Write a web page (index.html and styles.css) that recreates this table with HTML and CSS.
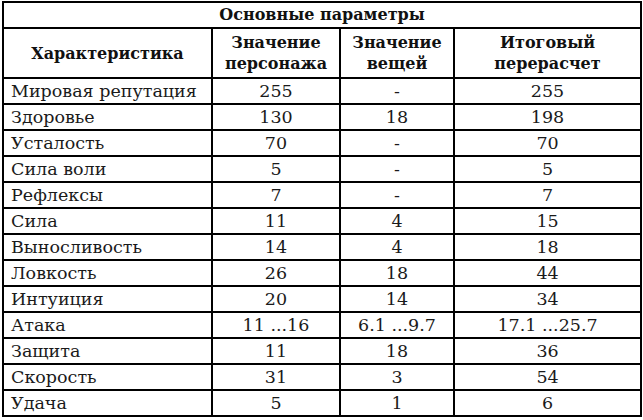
FILE: index.html
```html
<!DOCTYPE html>
<html lang="ru">
<head>
<meta charset="utf-8">
<link rel="stylesheet" href="styles.css">
</head>
<body>
<table class="params">
  <colgroup>
    <col class="c1"><col class="c2"><col class="c3"><col class="c4">
  </colgroup>
  <tr class="title"><th colspan="4">Основные параметры</th></tr>
  <tr class="head">
    <th>Характеристика</th>
    <th>Значение<br>персонажа</th>
    <th>Значение<br>вещей</th>
    <th>Итоговый<br>перерасчет</th>
  </tr>
  <tr><td class="name">Мировая репутация</td><td>255</td><td>-</td><td>255</td></tr>
  <tr><td class="name">Здоровье</td><td>130</td><td>18</td><td>198</td></tr>
  <tr><td class="name">Усталость</td><td>70</td><td>-</td><td>70</td></tr>
  <tr><td class="name">Сила воли</td><td>5</td><td>-</td><td>5</td></tr>
  <tr><td class="name">Рефлексы</td><td>7</td><td>-</td><td>7</td></tr>
  <tr><td class="name">Сила</td><td>11</td><td>4</td><td>15</td></tr>
  <tr><td class="name">Выносливость</td><td>14</td><td>4</td><td>18</td></tr>
  <tr><td class="name">Ловкость</td><td>26</td><td>18</td><td>44</td></tr>
  <tr><td class="name">Интуиция</td><td>20</td><td>14</td><td>34</td></tr>
  <tr><td class="name">Атака</td><td>11 ...16</td><td>6.1 ...9.7</td><td>17.1 ...25.7</td></tr>
  <tr><td class="name">Защита</td><td>11</td><td>18</td><td>36</td></tr>
  <tr><td class="name">Скорость</td><td>31</td><td>3</td><td>54</td></tr>
  <tr><td class="name">Удача</td><td>5</td><td>1</td><td>6</td></tr>
</table>
</body>
</html>
```
FILE: styles.css
```css
html, body {
  margin: 0;
  padding: 0;
  background: #fff;
}
body {
  padding: 1px 0 0 2px;
  font-family: "DejaVu Serif", "Liberation Serif", serif;
  color: #111;
}
.params {
  border-collapse: collapse;
  table-layout: fixed;
  width: 638px;
}
.c1 { width: 209px; }
.c2 { width: 128px; }
.c3 { width: 114px; }
.c4 { width: 187px; }
.params th,
.params td {
  border: 2px solid #000;
  padding: 0;
  text-align: center;
  line-height: 20px;
}
.params td {
  height: 24px;
  font-size: 17.5px;
  color: #1a1a1a;
  white-space: nowrap;
}
.params th {
  font-weight: bold;
  font-size: 16px;
}
.title th {
  height: 24px;
}
.head th {
  height: 48px;
  line-height: 21px;
}
.params td.name {
  text-align: left;
  padding-left: 7px;
}
```
